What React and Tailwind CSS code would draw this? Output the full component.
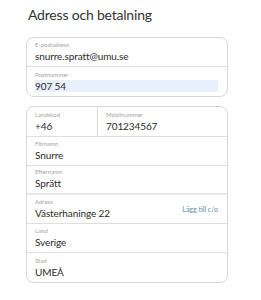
export default function App() {
  const font = { fontFamily: 'Lato, "Noto Sans", sans-serif' };
  const Field = ({ label, value, className = "", hl = false, right }) => (
    <div className={"flex items-end justify-between px-[8px] pt-[5px] pb-[4px] h-[29px] " + className}>
      <div className="flex flex-col flex-1 min-w-0">
        <div className="text-[6px] leading-[8px] text-[#a3a3a3]">{label}</div>
        <div className={"text-[10px] leading-[12px] tracking-[-0.1px] text-[#2b2b2b] mt-[1px] " + (hl ? "bg-[#e8f0fe]" : "")}>{value}</div>
      </div>
      {right}
    </div>
  );
  return (
    <div className="w-[261px] h-[300px] bg-white" style={font}>
      <div className="pl-[28px] pt-[6px] text-[14px] leading-[18px] tracking-[-0.2px] text-[#333]">Adress och betalning</div>
      <div className="mt-[13px] ml-[26px] w-[202px] border border-[#d6d6d6] rounded-[8px]">
        <Field label="E-postadress" value="snurre.spratt@umu.se" className="border-b border-[#dedede]" />
        <Field label="Postnummer" value="907 54" hl className="pr-[9px]" />
      </div>
      <div className="mt-[9px] ml-[26px] w-[202px] border border-[#d6d6d6] rounded-[8px]">
        <div className="flex border-b border-[#dedede]">
          <div className="w-[71px] border-r border-[#dedede]">
            <Field label="Landskod" value="+46" />
          </div>
          <div className="flex-1">
            <Field label="Mobilnummer" value="701234567" className="px-[5px]" />
          </div>
        </div>
        <Field label="Förnamn" value="Snurre" className="border-b border-[#dedede]" />
        <Field label="Efternamn" value="Sprätt" className="border-b-2 border-[#e6e6e6]" />
        <Field
          label="Adress"
          value="Västerhaninge 22"
          className="border-b border-[#dedede]"
          right={<div className="text-[7px] leading-[9px] text-[#5f8fa3] mb-[5px] mr-[1px]">Lägg till c/o</div>}
        />
        <Field label="Land" value="Sverige" className="border-b border-[#dedede]" />
        <Field label="Stad" value="UMEÅ" />
      </div>
    </div>
  );
}
